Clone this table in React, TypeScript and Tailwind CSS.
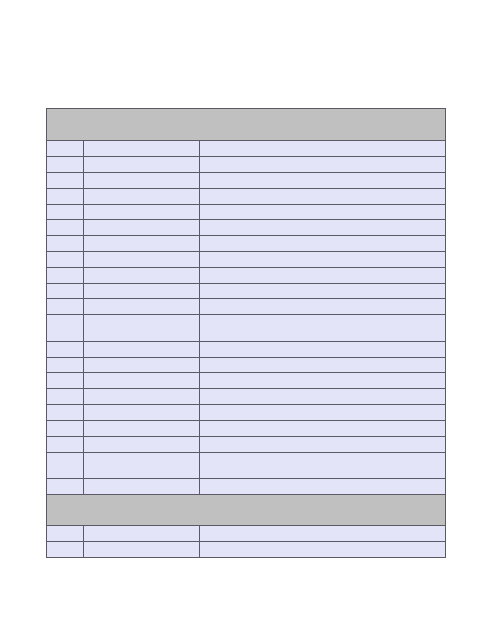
type Row = { kind: "head" | "body"; h: string };

// heights copied from the ruled form, line by line
const rows: Row[] = [
  { kind: "head", h: "h-8" },
  { kind: "body", h: "h-4" },
  { kind: "body", h: "h-4" },
  { kind: "body", h: "h-4" },
  { kind: "body", h: "h-4" },
  { kind: "body", h: "h-[15px]" },
  { kind: "body", h: "h-4" },
  { kind: "body", h: "h-4" },
  { kind: "body", h: "h-4" },
  { kind: "body", h: "h-4" },
  { kind: "body", h: "h-[15px]" },
  { kind: "body", h: "h-4" },
  { kind: "body", h: "h-[27px]" },
  { kind: "body", h: "h-4" },
  { kind: "body", h: "h-[15px]" },
  { kind: "body", h: "h-4" },
  { kind: "body", h: "h-4" },
  { kind: "body", h: "h-4" },
  { kind: "body", h: "h-4" },
  { kind: "body", h: "h-4" },
  { kind: "body", h: "h-[26px]" },
  { kind: "body", h: "h-4" },
  { kind: "head", h: "h-[31px]" },
  { kind: "body", h: "h-4" },
  { kind: "body", h: "h-4" },
];

export default function App() {
  return (
    <div className="w-[494px] h-[640px] bg-white pt-[108px]">
      <div className="ml-[46px] w-[400px] border-x border-t border-[#5a5a64]">
        {rows.map((r, i) =>
          r.kind === "head" ? (
            <div key={i} className={`${r.h} bg-[#c0c0c0] border-b border-[#5a5a64]`} />
          ) : (
            <div key={i} className={`${r.h} flex bg-[#e4e4f8] border-b border-[#5a5a64]`}>
              <div className="w-[37px] border-r border-[#5a5a64]" />
              <div className="w-[116px] border-r border-[#5a5a64]" />
              <div className="flex-1" />
            </div>
          )
        )}
      </div>
    </div>
  );
}
